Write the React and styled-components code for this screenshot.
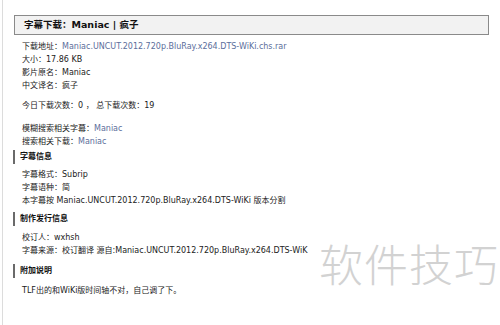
import styled, { createGlobalStyle } from "styled-components";

const GlobalStyle = createGlobalStyle`
  html, body {
    margin: 0;
    padding: 0;
    background: #fff;
  }
  body {
    font-family: "DejaVu Sans", Verdana, "Noto Sans CJK SC", sans-serif;
    font-size: 8px;
    color: #222;
  }
`;

const file = "Maniac.UNCUT.2012.720p.BluRay.x264.DTS-WiKi.chs.rar";

function App() {
  return (
    <Page>
      <GlobalStyle />
      <TitleBox>字幕下载：Maniac | 疯子</TitleBox>

      <Block $top={5}>
        <Line>
          下载地址：<Link>{file}</Link>
        </Line>
        <Line>大小：17.86 KB</Line>
        <Line>影片原名：Maniac</Line>
        <Line>中文译名：疯子</Line>
      </Block>

      <Block $top={7}>
        <Line>今日下载次数：0 ， 总下载次数：19</Line>
      </Block>

      <Block $top={10}>
        <Line>
          模糊搜索相关字幕：<Link>Maniac</Link>
        </Line>
        <Line>
          搜索相关下载：<Link>Maniac</Link>
        </Line>
      </Block>

      <Heading $top={2}>字幕信息</Heading>
      <Block $top={4}>
        <Line>字幕格式：Subrip</Line>
        <Line>字幕语种：简</Line>
        <Line>本字幕按 Maniac.UNCUT.2012.720p.BluRay.x264.DTS-WiKi 版本分割</Line>
      </Block>

      <Heading $top={5}>制作发行信息</Heading>
      <Block $top={5}>
        <Line>校订人：wxhsh</Line>
        <Line>字幕来源：校订翻译 源自:Maniac.UNCUT.2012.720p.BluRay.x264.DTS-WiK</Line>
      </Block>

      <Heading $top={7}>附加说明</Heading>
      <Block $top={6}>
        <Line>TLF出的和WiKi版时间轴不对，自己调了下。</Line>
      </Block>

      <Watermark>软件技巧</Watermark>
    </Page>
  );
}

export default App;

const Page = styled.div`
  position: relative;
  width: 500px;
  height: 325px;
  box-sizing: border-box;
  padding: 15px 13px 0 13px;
  border-left: 1px solid #dcdcdc;
  margin-left: 2px;
  overflow: hidden;
`;

const TitleBox = styled.div`
  height: 18px;
  line-height: 18px;
  border: 1px solid #8a8a8a;
  background: #f2f2f2;
  padding-left: 9px;
  font-size: 9.5px;
  font-weight: bold;
  color: #111;
  margin-left: -2px;
`;

const Block = styled.div`
  margin-top: ${(p) => p.$top}px;
  padding-left: 6px;
`;

const Line = styled.div`
  height: 13px;
  line-height: 13px;
  white-space: nowrap;
`;

const Link = styled.span`
  color: #5b6e9b;
`;

const Heading = styled.div`
  margin-top: ${(p) => p.$top}px;
  margin-left: -3px;
  height: 14px;
  line-height: 14px;
  border-left: 2px solid #6a6a6a;
  padding-left: 5px;
  font-weight: bold;
  color: #111;
`;

const Watermark = styled.div`
  position: absolute;
  right: 3px;
  top: 238px;
  font-family: "Noto Sans CJK SC", sans-serif;
  font-weight: 300;
  font-size: 44px;
  line-height: 50px;
  color: #d2d2d2;
  letter-spacing: 1px;
`;
